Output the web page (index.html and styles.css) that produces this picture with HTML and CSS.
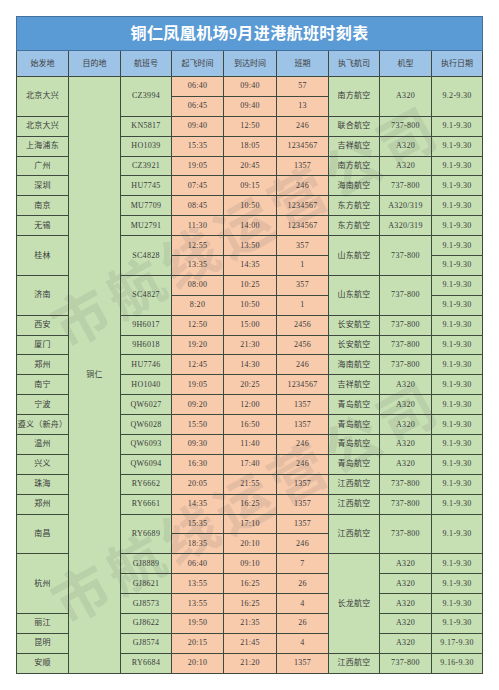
FILE: index.html
```html
<!DOCTYPE html>
<html lang="zh-CN">
<head>
<meta charset="utf-8">
<title>铜仁凤凰机场9月进港航班时刻表</title>
<link rel="stylesheet" href="styles.css">
</head>
<body>
<div class="sheet">
<table class="schedule">
<colgroup>
<col class="c52"><col class="c52"><col class="c51"><col class="c52"><col class="c53"><col class="c52"><col class="c51"><col class="c52"><col class="c51">
</colgroup>
<thead>
<tr class="title-row"><th colspan="9" class="title">铜仁凤凰机场9月进港航班时刻表</th></tr>
<tr class="head-row">
<th>始发地</th><th>目的地</th><th>航班号</th><th>起飞时间</th><th>到达时间</th><th>班期</th><th>执飞航司</th><th>机型</th><th>执行日期</th>
</tr>
</thead>
<tbody>
<tr><td rowspan="2">北京大兴</td><td rowspan="30" class="dest">铜仁</td><td rowspan="2">CZ3994</td><td class="o">06:40</td><td class="o">09:40</td><td class="o">57</td><td rowspan="2">南方航空</td><td rowspan="2">A320</td><td rowspan="2">9.2-9.30</td></tr>
<tr><td class="o">06:45</td><td class="o">09:40</td><td class="o">13</td></tr>
<tr><td>北京大兴</td><td>KN5817</td><td class="o">09:40</td><td class="o">12:50</td><td class="o">246</td><td>联合航空</td><td>737-800</td><td>9.1-9.30</td></tr>
<tr><td>上海浦东</td><td>HO1039</td><td class="o">15:35</td><td class="o">18:05</td><td class="o">1234567</td><td>吉祥航空</td><td>A320</td><td>9.1-9.30</td></tr>
<tr><td>广州</td><td>CZ3921</td><td class="o">19:05</td><td class="o">20:45</td><td class="o">1357</td><td>南方航空</td><td>A320</td><td>9.1-9.30</td></tr>
<tr><td>深圳</td><td>HU7745</td><td class="o">07:45</td><td class="o">09:15</td><td class="o">246</td><td>海南航空</td><td>737-800</td><td>9.1-9.30</td></tr>
<tr><td>南京</td><td>MU7709</td><td class="o">08:45</td><td class="o">10:50</td><td class="o">1234567</td><td>东方航空</td><td>A320/319</td><td>9.1-9.30</td></tr>
<tr><td>无锡</td><td>MU2791</td><td class="o">11:30</td><td class="o">14:00</td><td class="o">1234567</td><td>东方航空</td><td>A320/319</td><td>9.1-9.30</td></tr>
<tr><td rowspan="2">桂林</td><td rowspan="2">SC4828</td><td class="o">12:55</td><td class="o">13:50</td><td class="o">357</td><td rowspan="2">山东航空</td><td rowspan="2">737-800</td><td>9.1-9.30</td></tr>
<tr><td class="o">13:35</td><td class="o">14:35</td><td class="o">1</td><td>9.1-9.30</td></tr>
<tr><td rowspan="2">济南</td><td rowspan="2">SC4827</td><td class="o">08:00</td><td class="o">10:25</td><td class="o">357</td><td rowspan="2">山东航空</td><td rowspan="2">737-800</td><td>9.1-9.30</td></tr>
<tr><td class="o">8:20</td><td class="o">10:50</td><td class="o">1</td><td>9.1-9.30</td></tr>
<tr><td>西安</td><td>9H6017</td><td class="o">12:50</td><td class="o">15:00</td><td class="o">2456</td><td>长安航空</td><td>737-800</td><td>9.1-9.30</td></tr>
<tr><td>厦门</td><td>9H6018</td><td class="o">19:20</td><td class="o">21:30</td><td class="o">2456</td><td>长安航空</td><td>737-800</td><td>9.1-9.30</td></tr>
<tr><td>郑州</td><td>HU7746</td><td class="o">12:45</td><td class="o">14:30</td><td class="o">246</td><td>海南航空</td><td>737-800</td><td>9.1-9.30</td></tr>
<tr><td>南宁</td><td>HO1040</td><td class="o">19:05</td><td class="o">20:25</td><td class="o">1234567</td><td>吉祥航空</td><td>A320</td><td>9.1-9.30</td></tr>
<tr><td>宁波</td><td>QW6027</td><td class="o">09:20</td><td class="o">12:00</td><td class="o">1357</td><td>青岛航空</td><td>A320</td><td>9.1-9.30</td></tr>
<tr><td>遵义（新舟）</td><td>QW6028</td><td class="o">15:50</td><td class="o">16:50</td><td class="o">1357</td><td>青岛航空</td><td>A320</td><td>9.1-9.30</td></tr>
<tr><td>温州</td><td>QW6093</td><td class="o">09:30</td><td class="o">11:40</td><td class="o">246</td><td>青岛航空</td><td>A320</td><td>9.1-9.30</td></tr>
<tr><td>兴义</td><td>QW6094</td><td class="o">16:30</td><td class="o">17:40</td><td class="o">246</td><td>青岛航空</td><td>A320</td><td>9.1-9.30</td></tr>
<tr><td>珠海</td><td>RY6662</td><td class="o">20:05</td><td class="o">21:55</td><td class="o">1357</td><td>江西航空</td><td>737-800</td><td>9.1-9.30</td></tr>
<tr><td>郑州</td><td>RY6661</td><td class="o">14:35</td><td class="o">16:25</td><td class="o">1357</td><td>江西航空</td><td>737-800</td><td>9.1-9.30</td></tr>
<tr><td rowspan="2">南昌</td><td rowspan="2">RY6689</td><td class="o">15:35</td><td class="o">17:10</td><td class="o">1357</td><td rowspan="2">江西航空</td><td rowspan="2">737-800</td><td rowspan="2">9.1-9.30</td></tr>
<tr><td class="o">18:35</td><td class="o">20:10</td><td class="o">246</td></tr>
<tr><td rowspan="3">杭州</td><td>GJ8889</td><td class="o">06:40</td><td class="o">09:10</td><td class="o">7</td><td rowspan="5">长龙航空</td><td>A320</td><td>9.1-9.30</td></tr>
<tr><td>GJ8621</td><td class="o">13:55</td><td class="o">16:25</td><td class="o">26</td><td>A320</td><td>9.1-9.30</td></tr>
<tr><td>GJ8573</td><td class="o">13:55</td><td class="o">16:25</td><td class="o">4</td><td>A320</td><td>9.1-9.30</td></tr>
<tr><td>丽江</td><td>GJ8622</td><td class="o">19:50</td><td class="o">21:35</td><td class="o">26</td><td>A320</td><td>9.1-9.30</td></tr>
<tr><td>昆明</td><td>GJ8574</td><td class="o">20:15</td><td class="o">21:45</td><td class="o">4</td><td>A320</td><td>9.17-9.30</td></tr>
<tr><td>安顺</td><td>RY6684</td><td class="o">20:10</td><td class="o">21:20</td><td class="o">1357</td><td>江西航空</td><td>737-800</td><td>9.16-9.30</td></tr>
</tbody>
</table>
<span class="watermark wm-upper">市航线运营公司</span>
<span class="watermark wm-lower">市航线运营公司</span>
</div>
</body>
</html>
```
FILE: styles.css
```css
html, body {
  margin: 0;
  padding: 0;
  background: #ffffff;
}

body {
  font-family: "Liberation Serif", "Noto Sans CJK SC", serif;
  color: #3a3a3a;
}

.sheet {
  position: relative;
  width: 468px;
  margin: 15px 0 0 15px;
  padding: 1px 0 1px 1px;
  overflow: hidden;
}

.schedule {
  width: 466px;
  border-collapse: collapse;
  table-layout: fixed;
}

.c51 { width: 51px; }
.c52 { width: 52px; }
.c53 { width: 53px; }

.schedule th,
.schedule td {
  border: 1px solid #3d4a3d;
  padding: 0;
  text-align: center;
  vertical-align: middle;
  font-weight: normal;
  font-size: 8px;
  line-height: 10px;
  white-space: nowrap;
  overflow: hidden;
}

.schedule td {
  background: #c6e0b4;
  letter-spacing: 0.3px;
}

.schedule td.o {
  background: #f8cbad;
}

.title-row {
  height: 34px;
}

.schedule th.title {
  background: #5b9bd5;
  color: #ffffff;
  font-weight: bold;
  font-size: 16px;
  line-height: 20px;
  letter-spacing: 0.4px;
  border-color: #41719c;
}

.head-row {
  height: 26px;
}

.head-row th {
  background: #9dc3e6;
  color: #404040;
}

.schedule tbody tr {
  height: 19.9px;
}

.watermark {
  position: absolute;
  left: 40px;
  font-family: "Noto Sans CJK SC", sans-serif;
  font-weight: bold;
  font-size: 56px;
  line-height: 60px;
  letter-spacing: 6px;
  color: rgba(80, 80, 80, 0.11);
  white-space: nowrap;
  transform-origin: 0 50%;
  transform: rotate(-29deg);
  pointer-events: none;
}

.wm-upper {
  top: 284px;
}

.wm-lower {
  top: 560px;
}
```
